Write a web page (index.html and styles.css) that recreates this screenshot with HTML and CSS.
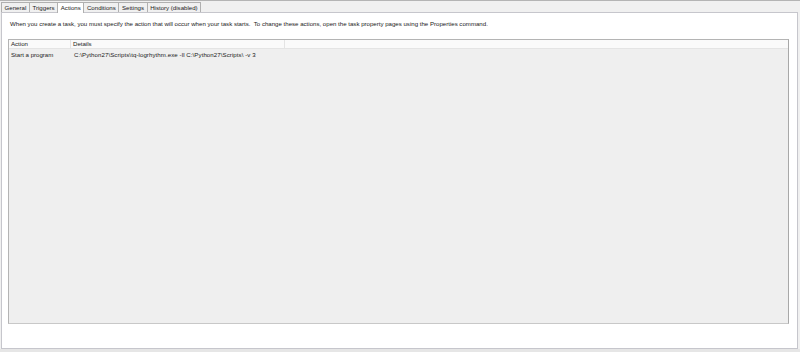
FILE: index.html
```html
<!DOCTYPE html>
<html>
<head>
<meta charset="utf-8">
<link rel="stylesheet" href="styles.css">
</head>
<body>
<div class="window">
  <div class="tabs">
    <div class="tab">General</div>
    <div class="tab">Triggers</div>
    <div class="tab active">Actions</div>
    <div class="tab">Conditions</div>
    <div class="tab">Settings</div>
    <div class="tab">History (disabled)</div>
  </div>
  <div class="panel">
    <p class="desc">When you create a task, you must specify the action that will occur when your task starts.&nbsp; To change these actions, open the task property pages using the Properties command.</p>
    <div class="list">
      <div class="head">
        <div class="col c1">Action</div>
        <div class="col c2">Details</div>
        <div class="col c3"></div>
      </div>
      <div class="row">
        <div class="cell c1">Start a program</div>
        <div class="cell c2">C:\Python27\Scripts\tq-logrhythm.exe -ll C:\Python27\Scripts\ -v 3</div>
      </div>
    </div>
  </div>
</div>
</body>
</html>
```

FILE: styles.css
```css
* { box-sizing: border-box; }
html, body { margin: 0; padding: 0; }
body {
  width: 800px;
  height: 352px;
  background: #e6e6e6;
  font-family: "Liberation Sans", Arial, sans-serif;
  font-size: 6.1px;
  color: #1a1a1a;
  overflow: hidden;
}
.window {
  height: 349px;
  background: #f0f0f0;
  border-top: 1px solid #b4b4b4;
  display: flex;
  flex-direction: column;
}
.tabs {
  display: flex;
  align-items: flex-end;
  height: 11px;
  padding-left: 1px;
}
.tab {
  height: 10px;
  line-height: 9px;
  padding: 0 2.6px;
  border: 1px solid #b0b0b0;
  border-bottom: none;
  border-right: none;
  background: #f0f0f0;
  white-space: nowrap;
}
.tab:last-child { border-right: 1px solid #b0b0b0; }
.tab.active {
  background: #ffffff;
  height: 11px;
  line-height: 10px;
  margin-bottom: -1px;
  position: relative;
  border-right: 1px solid #b0b0b0;
}
.tab.active + .tab { border-left: none; }
.panel {
  flex: 1;
  margin: 0 2px 0 1px;
  background: #ffffff;
  border: 1px solid #c6c6cc;
  display: flex;
  flex-direction: column;
  padding: 0 8px 24px 6px;
}
.desc {
  margin: 7px 0 0 2px;
  height: 19px;
  white-space: nowrap;
}
.list {
  flex: 1;
  border: 1px solid #b4b4b4;
  border-right-color: #a8a8a8;
  border-bottom-color: #c8c8c8;
  background: #efefef;
}
.head {
  display: flex;
  height: 9px;
  background: #fafafa;
  border-bottom: 1px solid #e4e4e4;
}
.col {
  line-height: 8px;
  padding-left: 2px;
  border-right: 1px solid #e4e4e4;
}
.col.c3 { border-right: none; flex: 1; }
.c1 { width: 62px; }
.c2 { width: 214px; }
.row {
  display: flex;
  height: 11px;
}
.cell {
  line-height: 11px;
  padding-left: 2px;
  white-space: nowrap;
}
.cell.c2 { width: auto; padding-left: 3px; letter-spacing: 0.08px; }
```
